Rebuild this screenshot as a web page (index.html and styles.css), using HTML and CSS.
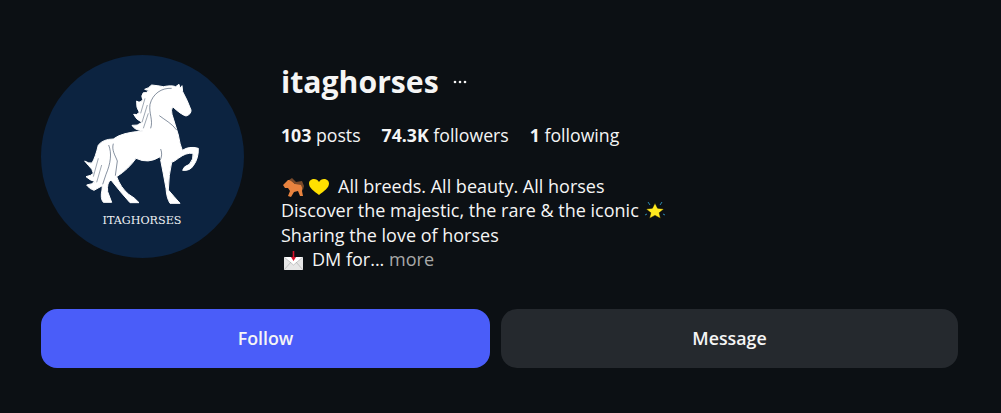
FILE: index.html
```html
<!DOCTYPE html>
<html lang="en">
<head>
    <meta charset="UTF-8">
    <meta name="viewport" content="width=device-width, initial-scale=1.0">
    <title>itaghorses</title>
    <link rel="stylesheet" href="styles.css">
</head>
<body>
    <div class="profile">
        <div class="header">
            <svg class="avatar" viewBox="33 30 609 609">
                <circle cx="337.5" cy="334.5" r="304.5" fill="#0c2340"/>
                <path fill="#fff" stroke="#fff" stroke-width="3" stroke-linejoin="round" d="M447 118 L450 130 L456 122 L458 140 Q472 165 483 195 Q484 208 468 213 Q452 208 428 185 Q422 195 426 208 Q436 240 445 270 Q450 300 457 316 Q478 302 505 310 Q506 340 490 362 Q480 378 458 376 Q460 364 478 358 Q492 342 489 325 Q468 322 445 340 Q432 350 425 352 Q416 390 415 435 Q432 455 450 475 L420 475 Q410 460 408 430 Q400 385 390 335 Q355 358 318 340 Q296 372 260 395 Q272 428 296 448 Q314 458 327 473 L300 473 Q272 442 243 405 Q230 412 233 440 L245 472 L220 472 Q210 460 216 435 L217 422 L192 436 Q178 432 170 420 Q186 418 195 410 Q178 405 168 395 Q184 392 190 385 Q188 372 176 362 L164 348 Q176 356 186 354 Q196 338 205 300 Q220 282 250 282 Q275 262 340 258 Q314 256 306 241 Q322 244 336 232 Q318 224 311 208 Q320 212 328 202 Q318 188 320 168 Q330 176 338 164 Q332 152 340 143 Q348 146 358 136 Q350 136 344 133 Q356 130 365 120 Q385 122 400 125 Q425 120 437 125 Z"/>
                <path fill="none" stroke="#0c2340" stroke-width="1.500" d="M425 130 C395 128 368 146 360 178 C356 205 370 225 362 250 M250 296 C244 315 256 332 262 348 L256 392 M236 300 C246 325 242 355 228 388 L218 418 M392 312 C397 325 395 335 391 345 M440 255 C425 235 405 225 388 212"/>
                <path fill="none" stroke="#0c2340" stroke-width="1.200" d="M345 160 L332 205 M352 180 L336 232 M355 205 L340 250 M205 340 L190 395 M215 360 L200 412"/>
                <text class="avatar-name" x="336" y="536" text-anchor="middle">ITAGHORSES</text>
            </svg>
            <div class="info">
                <div class="name-row">
                    <h1 class="username">itaghorses</h1>
                    <svg class="more-dots" viewBox="0 0 24 24">
                        <circle cx="7" cy="12" r="1.300" fill="#f5f5f5"/>
                        <circle cx="12" cy="12" r="1.300" fill="#f5f5f5"/>
                        <circle cx="17" cy="12" r="1.300" fill="#f5f5f5"/>
                    </svg>
                </div>
                <div class="stats">
                    <span><b>103</b> posts</span>
                    <span><b>74.3K</b> followers</span>
                    <span><b>1</b> following</span>
                </div>
                <div class="bio">
                    <p>
                        <svg class="emoji" viewBox="0 0 21 19">
                            <path fill="#e8833f" d="M0 7 L5 2 L8 2 L12 6 L18 6 L20 9 L19 13 L20 18 L17 18 L15 13 L11 14 L8 19 L5 18 L7 13 L5 10 L2 10 Z"/>
                            <path fill="#7a4a2a" d="M6 2 L9 0 L13 4 L19 3 L21 8 L20 12 L18 7 L12 6 L8 3 Z"/>
                        </svg><svg class="emoji heart" viewBox="0 0 20 16">
                            <path fill="#ffe000" d="M10 16 C5 12 0 9 0 4.500 C0 1.500 2.500 0 5 0 C7 0 9 1 10 3 C11 1 13 0 15 0 C17.500 0 20 1.500 20 4.500 C20 9 15 12 10 16 Z"/>
                        </svg><span class="after-emoji">All breeds. All beauty. All horses</span>
                    </p>
                    <p>Discover the majestic, the rare &amp; the iconic<svg class="emoji star" viewBox="0 0 20 17">
                            <path fill="#ffe81f" stroke="#000" stroke-width="0.500" d="M10 1 L12.600 6.200 L19 7 L14.200 10.800 L15.600 16.500 L10 13.400 L4.400 16.500 L5.800 10.800 L1 7 L7.400 6.200 Z"/>
                            <path stroke="#2a8ab0" stroke-width="1" d="M3 0 L5 3 M17 0 L15 3 M0 13 L2 12 M20 13 L18 12"/>
                        </svg></p>
                    <p>Sharing the love of horses</p>
                    <p>
                        <svg class="emoji" viewBox="0 0 21 19">
                            <path fill="#e6e6e6" d="M1 6 H20 V19 H1 Z"/>
                            <path fill="#fff" d="M1 6 H20 L10.500 14 Z"/>
                            <path fill="none" stroke="#aaa" stroke-width="0.600" d="M1 6 L10.500 14 L20 6 M1 19 L8 11 M20 19 L13 11"/>
                            <path fill="#d8102a" d="M9.700 0 H11.300 V6 H13 L10.500 10 L8 6 H9.700 Z"/>
                        </svg><span class="after-mail">DM for... <span class="more">more</span></span>
                    </p>
                </div>
            </div>
        </div>
        <div class="actions">
            <button class="btn primary">Follow</button>
            <button class="btn secondary">Message</button>
        </div>
    </div>
</body>
</html>
```

FILE: styles.css
```css
body {
    margin: 0;
    background-color: #0c1014;
    color: #f5f5f5;
    font-family: "Open Sans", Arial, sans-serif;
}
.profile {
    padding: 55px 0 0 41px;
}
.header {
    display: flex;
    gap: 37px;
}
.avatar {
    width: 203px;
    height: 203px;
    flex-shrink: 0;
}
.avatar-name {
    font-family: "DejaVu Serif", serif;
    font-size: 33.500px;
    fill: #f0f2f5;
}
.name-row {
    display: flex;
    align-items: center;
    gap: 9px;
    height: 53px;
}
.username {
    margin: 0;
    font-size: 30.200px;
    font-weight: 700;
    line-height: 53px;
}
.more-dots {
    width: 24px;
    height: 24px;
}
.stats {
    display: flex;
    gap: 21px;
    margin-top: 15px;
    font-size: 17.700px;
    line-height: 24px;
}
.stats b {
    font-weight: 700;
}
.bio {
    margin-top: 27px;
    font-size: 18px;
}
.bio p {
    margin: 0;
    height: 24.400px;
    line-height: 24.400px;
    white-space: nowrap;
}
.emoji {
    width: 21px;
    height: 19px;
    vertical-align: -4px;
    margin-left: 2px;
}
.heart {
    width: 20px;
    height: 16px;
    margin-left: 5px;
    vertical-align: -2px;
}
.star {
    width: 20px;
    height: 17px;
    margin-left: 6px;
    vertical-align: -2px;
}
.after-emoji {
    margin-left: 9px;
}
.after-mail {
    margin-left: 8px;
}
.more {
    color: #a8a8a8;
}
.actions {
    display: grid;
    grid-template-columns: 449px 457px;
    gap: 11px;
    margin-top: 37px;
}
.btn {
    height: 59px;
    border: none;
    border-radius: 16px;
    color: #f5f5f5;
    font-family: inherit;
    font-size: 17.800px;
    font-weight: 600;
}
.primary {
    background-color: #4a5df9;
}
.secondary {
    background-color: #25292e;
}
```
